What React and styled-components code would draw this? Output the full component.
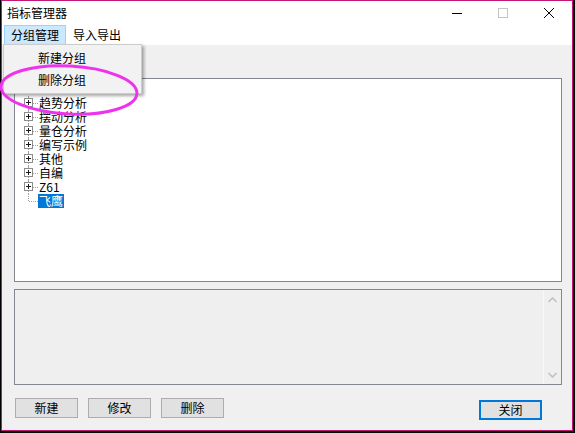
import React from 'react';
import styled, { createGlobalStyle } from 'styled-components';

const GlobalStyle = createGlobalStyle`
  html, body {
    margin: 0;
    padding: 0;
    background: #000;
  }
  body {
    font-family: "Noto Sans CJK SC", "Liberation Sans", sans-serif;
    font-size: 12px;
    color: #000;
  }
`;

const groups = ['趋势分析', '摆动分析', '量仓分析', '编写示例', '其他', '自编', 'Z61'];

const App = () => {
  return (
    <>
      <GlobalStyle />
      <Desktop>
        <Window>
          <TitleBar>
            <Title>指标管理器</Title>
            <Caption>
              <svg width="10" height="10" viewBox="0 0 10 10">
                <path d="M0 5.5H10" stroke="#000" strokeWidth="1" />
              </svg>
            </Caption>
            <Caption>
              <svg width="10" height="10" viewBox="0 0 10 10">
                <rect x="0.5" y="0.5" width="9" height="9" fill="none" stroke="#c4c4c4" />
              </svg>
            </Caption>
            <Caption>
              <svg width="10" height="10" viewBox="0 0 10 10">
                <path d="M0 0L10 10M10 0L0 10" stroke="#000" strokeWidth="1" />
              </svg>
            </Caption>
          </TitleBar>

          <MenuBar>
            <MenuItem open>分组管理</MenuItem>
            <MenuItem>导入导出</MenuItem>
          </MenuBar>

          <Client>
            <Tree>
              {groups.map((name) => (
                <TreeRow key={name}>
                  <Gutter>
                    <PlusBox />
                  </Gutter>
                  <Label>{name}</Label>
                </TreeRow>
              ))}
              <TreeRow>
                <Gutter last />
                <Label selected>飞鹰</Label>
              </TreeRow>
            </Tree>

            <Panel>
              <ScrollBar>
                <svg width="9" height="6" viewBox="0 0 9 6">
                  <path d="M0.5 5L4.5 1L8.5 5" fill="none" stroke="#c2c2c2" strokeWidth="1.6" />
                </svg>
                <svg width="9" height="6" viewBox="0 0 9 6">
                  <path d="M0.5 1L4.5 5L8.5 1" fill="none" stroke="#c2c2c2" strokeWidth="1.6" />
                </svg>
              </ScrollBar>
            </Panel>

            <ButtonRow>
              <Button>新建</Button>
              <Button>修改</Button>
              <Button>删除</Button>
              <Button primary>关闭</Button>
            </ButtonRow>
          </Client>

          <Dropdown>
            <DropItem>新建分组</DropItem>
            <DropItem>删除分组</DropItem>
          </Dropdown>

          <Marker width="142" height="56" viewBox="0 0 142 56">
            <ellipse
              cx="70"
              cy="28"
              rx="68"
              ry="24"
              fill="none"
              stroke="#ee33ee"
              strokeWidth="3"
              transform="rotate(3 70 28)"
            />
          </Marker>
        </Window>
      </Desktop>
    </>
  );
};

const PlusBox = () => (
  <svg width="9" height="9" viewBox="0 0 9 9">
    <rect x="0.5" y="0.5" width="8" height="8" fill="#fff" stroke="#8c8c8c" />
    <path d="M2 4.5H7M4.5 2V7" stroke="#1a1a1a" strokeWidth="1" />
  </svg>
);

const Desktop = styled.div`
  width: 575px;
  height: 433px;
  padding-left: 1px;
  box-sizing: border-box;
  overflow: hidden;
  background: #000;
`;

const Window = styled.div`
  position: relative;
  width: 572px;
  height: 431px;
  box-sizing: border-box;
  border: 1px solid #c3167a;
  background: #f0f0f0;
  display: flex;
  flex-direction: column;
`;

const TitleBar = styled.div`
  height: 23px;
  background: #fff;
  display: flex;
  align-items: center;
`;

const Title = styled.div`
  flex: 1;
  padding-left: 5px;
  font-size: 12px;
  line-height: 23px;
`;

const Caption = styled.div`
  width: 46px;
  height: 23px;
  display: flex;
  align-items: center;
  justify-content: center;
`;

const MenuBar = styled.div`
  height: 21px;
  background: #fff;
  display: flex;
  align-items: flex-start;
  padding: 1px 0 0 2px;
  box-sizing: border-box;
`;

const MenuItem = styled.div`
  height: 20px;
  box-sizing: border-box;
  padding: 0 6px;
  line-height: 18px;
  border: 1px solid ${({ open }) => (open ? '#99d1ff' : 'transparent')};
  background: ${({ open }) => (open ? '#cce8ff' : 'transparent')};
`;

const Client = styled.div`
  flex: 1;
  display: flex;
  flex-direction: column;
  padding: 33px 10px 0 12px;
`;

const Tree = styled.div`
  height: 204px;
  box-sizing: border-box;
  border: 1px solid #828790;
  background: #fff;
  padding: 17px 0 0 9px;
`;

const TreeRow = styled.div`
  display: flex;
  height: 14px;
  align-items: center;
`;

const Gutter = styled.div`
  position: relative;
  width: 14px;
  height: 14px;
  display: flex;
  align-items: flex-start;
  padding-top: 2px;
  box-sizing: border-box;

  &::before {
    content: '';
    position: absolute;
    left: 4px;
    top: 0;
    height: ${({ last }) => (last ? '7px' : '14px')};
    border-left: 1px dotted #a0a0a0;
  }

  &::after {
    content: '';
    position: absolute;
    left: 5px;
    right: 0;
    top: 7px;
    border-top: 1px dotted #a0a0a0;
  }

  svg {
    position: relative;
    z-index: 1;
  }
`;

const Label = styled.div`
  display: block;
  padding: 0 1px;
  height: 14px;
  line-height: 14px;
  font-size: 12px;
  white-space: nowrap;
  background: ${({ selected }) => (selected ? '#0078d7' : 'transparent')};
  color: ${({ selected }) => (selected ? '#fff' : '#000')};
`;

const Panel = styled.div`
  margin-top: 7px;
  height: 96px;
  box-sizing: border-box;
  border: 1px solid #828790;
  background: #efefef;
  display: flex;
  justify-content: flex-end;
`;

const ScrollBar = styled.div`
  width: 17px;
  border-left: 1px solid #f8f8f8;
  display: flex;
  flex-direction: column;
  align-items: center;
  justify-content: space-between;
  padding: 7px 0 6px;
`;

const ButtonRow = styled.div`
  margin-top: 13px;
  padding-left: 1px;
  display: flex;
  align-items: flex-start;
  gap: 10px;
`;

const Button = styled.button`
  width: 63px;
  height: 20px;
  box-sizing: border-box;
  margin: ${({ primary }) => (primary ? '2px 20px 0 auto' : '0')};
  padding: 0;
  font-family: inherit;
  font-size: 12px;
  line-height: 16px;
  color: #000;
  background: #e1e1e1;
  border: ${({ primary }) => (primary ? '2px solid #0078d7' : '1px solid #adadad')};
`;

const Dropdown = styled.div`
  position: absolute;
  left: 1px;
  top: 43px;
  width: 139px;
  box-sizing: border-box;
  padding: 2px 0;
  background: #f2f2f2;
  border: 1px solid #cccccc;
  box-shadow: 2px 2px 3px rgba(0, 0, 0, 0.35);
  z-index: 2;
`;

const DropItem = styled.div`
  height: 22px;
  line-height: 22px;
  padding-left: 34px;
  font-size: 12px;
`;

const Marker = styled.svg`
  position: absolute;
  left: -3px;
  top: 61px;
  z-index: 3;
  overflow: visible;
`;

export default App;
